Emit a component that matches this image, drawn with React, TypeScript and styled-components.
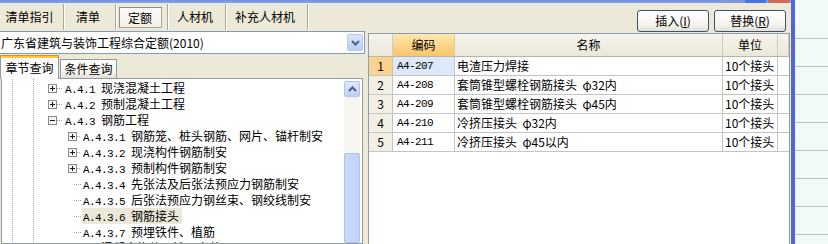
import React from 'react';
import styled, { createGlobalStyle } from 'styled-components';

const FONT = `"Noto Sans CJK SC", "Liberation Sans", sans-serif`;
const MONO = `"Liberation Mono", "DejaVu Sans Mono", monospace`;

const GlobalStyle = createGlobalStyle`
  html, body { margin: 0; padding: 0; }
  body {
    width: 828px;
    height: 244px;
    overflow: hidden;
    background: #f1faf7;
    font-family: ${FONT};
    font-size: 12px;
    color: #000;
  }
  * { box-sizing: border-box; }
`;

const Root = styled.div`
  display: flex;
  width: 828px;
  height: 244px;
  overflow: hidden;
`;

const Window = styled.div`
  width: 795px;
  flex: none;
  display: flex;
  flex-direction: column;
  background: #ece9d8;
  border-right: 4px solid #5567d4;
  overflow: hidden;
`;

const TitleStrip = styled.div`
  height: 3px;
  flex: none;
  display: flex;
  justify-content: flex-end;
  gap: 2px;
  padding-right: 2px;
  background: linear-gradient(#6f8fe0, #8aa5e6);
`;

const CaptionButton = styled.div<{ $tone: 'min' | 'max' | 'close' }>`
  width: 21px;
  height: 3px;
  background: ${(p) => (p.$tone === 'close' ? '#cf6a58' : p.$tone === 'max' ? '#4573e0' : '#7d96d8')};
`;

const TopBar = styled.div`
  height: 28px;
  flex: none;
  display: flex;
  align-items: flex-start;
`;

const Tabs = styled.div`
  display: flex;
  height: 28px;
`;

const Tab = styled.div<{ $w: number }>`
  width: ${(p) => p.$w}px;
  display: flex;
  align-items: center;
  justify-content: center;
  padding-right: 4px;
  line-height: 14px;
  white-space: nowrap;
`;

const TabSep = styled.div`
  width: 2px;
  margin: 1px 0 1px;
  border-left: 1px solid #aca899;
  border-right: 1px solid #fff;
`;

const ActiveTabBox = styled.div`
  width: 43px;
  height: 21px;
  margin-top: 1px;
  display: flex;
  align-items: center;
  justify-content: center;
  border: 1px solid #a9a697;
  border-top-color: #8f8c7e;
  border-left-color: #8f8c7e;
  background: linear-gradient(#fbfbf9, #f1efe7);
`;

const ButtonGroup = styled.div`
  margin-left: auto;
  display: flex;
  gap: 5px;
  padding: 7px 5px 0 0;
`;

const PushButton = styled.div`
  width: 72px;
  height: 22px;
  display: flex;
  align-items: center;
  justify-content: center;
  border: 1px solid #3d5270;
  border-radius: 3px;
  background: linear-gradient(#ffffff, #f4f3ee 70%, #e2dfd4);
  line-height: 14px;
  u { text-underline-offset: 1px; }
`;

const Main = styled.div`
  flex: 1;
  min-height: 0;
  display: flex;
`;

const LeftPane = styled.div`
  width: 365px;
  flex: none;
  display: flex;
  flex-direction: column;
`;

const Combo = styled.div`
  height: 23px;
  flex: none;
  display: flex;
  align-items: center;
  background: #fff;
  border: 1px solid #7f9db9;
  border-left: none;
  padding-left: 1px;
`;

const ComboText = styled.div`
  flex: 1;
  line-height: 14px;
  white-space: nowrap;
`;

const ComboArrow = styled.div`
  width: 16px;
  height: 17px;
  margin-right: 1px;
  display: flex;
  align-items: center;
  justify-content: center;
  border: 1px solid #b6c9f3;
  border-radius: 2px;
  background: linear-gradient(#dde7fd, #b9cdf8);
`;

const SubTabs = styled.div`
  height: 25px;
  flex: none;
  display: flex;
  align-items: flex-end;
  padding-top: 1px;
  margin-bottom: -1px;
  position: relative;
  z-index: 1;
`;

const SubTabActive = styled.div`
  width: 59px;
  height: 24px;
  display: flex;
  align-items: center;
  justify-content: center;
  background: #fcfcfe;
  border: 1px solid #919b9c;
  border-top: 1px solid #e68b2c;
  border-bottom: none;
  box-shadow: inset 0 2px 0 #ffc73c;
  padding-top: 1px;
  line-height: 14px;
`;

const SubTabInactive = styled.div`
  width: 57px;
  height: 19px;
  margin-left: 1px;
  margin-bottom: 1px;
  display: flex;
  align-items: center;
  justify-content: center;
  border: 1px solid #919b9c;
  border-bottom: none;
  background: linear-gradient(#ffffff, #f3f2ec 70%, #e3e1d7);
  line-height: 14px;
`;

const TreePanel = styled.div`
  flex: 1;
  min-height: 0;
  margin: 0 2px 0 1px;
  border: 1px solid #919b9c;
  background: #fff;
  display: flex;
  overflow: hidden;
`;

const TreeList = styled.div`
  flex: 1;
  min-width: 0;
  padding-top: 1px;
  overflow: hidden;
  background-image: repeating-linear-gradient(to bottom, #a3a3a3 0 1px, transparent 1px 2px),
    repeating-linear-gradient(to bottom, #a3a3a3 0 1px, transparent 1px 2px);
  background-size: 1px 100%, 1px 100%;
  background-position: 10px 0, 31px 0;
  background-repeat: no-repeat;
`;

const TreeRow = styled.div<{ $pad: number }>`
  height: 16px;
  display: flex;
  align-items: center;
  padding-left: ${(p) => p.$pad}px;
  white-space: nowrap;
`;

const Stub = styled.span<{ $w: number }>`
  width: ${(p) => p.$w}px;
  height: 1px;
  flex: none;
  background: repeating-linear-gradient(to right, #a3a3a3 0 1px, transparent 1px 2px);
`;

const BoxSvg = styled.svg`
  flex: none;
  display: block;
`;

const NodeLabel = styled.span<{ $selected?: boolean }>`
  margin-left: 1px;
  padding: 0 3px 0 1px;
  height: 16px;
  line-height: 16px;
  background: ${(p) => (p.$selected ? '#ebe8da' : 'transparent')};
`;

const Code = styled.span`
  font-family: ${MONO};
  font-size: 11px;
  letter-spacing: -0.6px;
  white-space: pre;
`;

const ScrollBar = styled.div`
  width: 16px;
  flex: none;
  margin: 2px 2px 0 0;
  display: flex;
  flex-direction: column;
  background: #f6f5f0;
`;

const ScrollButton = styled.div`
  height: 16px;
  flex: none;
  display: flex;
  align-items: center;
  justify-content: center;
  border: 1px solid #b3c6f2;
  border-radius: 2px;
  background: linear-gradient(#e0e9fd, #bccff8);
`;

const ScrollGap = styled.div`
  height: 56px;
  flex: none;
`;

const ScrollThumb = styled.div`
  flex: 1;
  border: 1px solid #adc2f0;
  border-radius: 2px;
  background: linear-gradient(to right, #cbdafb, #c2d3fa);
`;

const RightPane = styled.div`
  flex: 1;
  min-width: 0;
  display: flex;
  flex-direction: column;
  padding: 2px 1px 0 3px;
`;

const TableBox = styled.div`
  flex: 1;
  border: 1px solid #8f9cae;
  border-bottom: none;
  background: #fff;
  overflow: hidden;
`;

const COLS = '24px 62px 268px 55px 1fr';

const HeaderRow = styled.div`
  display: grid;
  grid-template-columns: ${COLS};
  height: 23px;
  border-bottom: 1px solid #b8b6a8;
`;

const HeaderCell = styled.div<{ $active?: boolean }>`
  display: flex;
  align-items: center;
  justify-content: center;
  border-right: 1px solid #cfccbc;
  background: ${(p) =>
    p.$active ? 'linear-gradient(#ffe6b0, #f8c668)' : 'linear-gradient(#f6f4ec, #ebe8d9)'};
  line-height: 14px;
`;

const DataRow = styled.div`
  display: grid;
  grid-template-columns: ${COLS};
  height: 19px;
`;

const Cell = styled.div<{ $bg?: string; $center?: boolean; $pad?: number }>`
  display: flex;
  align-items: center;
  justify-content: ${(p) => (p.$center ? 'center' : 'flex-start')};
  padding-left: ${(p) => p.$pad ?? 0}px;
  border-right: 1px solid #c4c4c4;
  border-bottom: 1px solid #c4c4c4;
  background: ${(p) => p.$bg ?? '#fff'};
  line-height: 14px;
  white-space: pre;
  overflow: hidden;
`;

const FillCell = styled.div`
  border-bottom: 1px solid #c4c4c4;
`;

const OuterSheet = styled.div`
  flex: 1;
  display: flex;
  flex-direction: column;
  background: #f1faf7;
`;

const SheetCell = styled.div<{ $h: number }>`
  height: ${(p) => p.$h}px;
  flex: none;
  border-bottom: 1px solid #b9c4c0;
`;

type TreeNode = {
  level: 1 | 2;
  kind: 'plus' | 'minus' | 'leaf';
  code: string;
  name: string;
  selected?: boolean;
};

const tree: TreeNode[] = [
  { level: 1, kind: 'plus', code: 'A.4.1', name: '现浇混凝土工程' },
  { level: 1, kind: 'plus', code: 'A.4.2', name: '预制混凝土工程' },
  { level: 1, kind: 'minus', code: 'A.4.3', name: '钢筋工程' },
  { level: 2, kind: 'plus', code: 'A.4.3.1', name: '钢筋笼、桩头钢筋、网片、锚杆制安' },
  { level: 2, kind: 'plus', code: 'A.4.3.2', name: '现浇构件钢筋制安' },
  { level: 2, kind: 'plus', code: 'A.4.3.3', name: '预制构件钢筋制安' },
  { level: 2, kind: 'leaf', code: 'A.4.3.4', name: '先张法及后张法预应力钢筋制安' },
  { level: 2, kind: 'leaf', code: 'A.4.3.5', name: '后张法预应力钢丝束、钢绞线制安' },
  { level: 2, kind: 'leaf', code: 'A.4.3.6', name: '钢筋接头', selected: true },
  { level: 2, kind: 'leaf', code: 'A.4.3.7', name: '预埋铁件、植筋' },
  { level: 1, kind: 'plus', code: 'A.4.4', name: '混凝土构件运输及安装' },
];

const rows = [
  { n: 1, code: 'A4-207', name: '电渣压力焊接', unit: '10个接头' },
  { n: 2, code: 'A4-208', name: '套筒锥型螺栓钢筋接头  φ32内', unit: '10个接头' },
  { n: 3, code: 'A4-209', name: '套筒锥型螺栓钢筋接头  φ45内', unit: '10个接头' },
  { n: 4, code: 'A4-210', name: '冷挤压接头  φ32内', unit: '10个接头' },
  { n: 5, code: 'A4-211', name: '冷挤压接头  φ45以内', unit: '10个接头' },
];

const ExpandBox = ({ open }: { open?: boolean }) => (
  <BoxSvg width="9" height="9" viewBox="0 0 9 9">
    <rect x="0.5" y="0.5" width="8" height="8" fill="#f6f6f1" stroke="#8a8a8a" />
    <path d="M2 4.5h5" stroke="#1a1a1a" />
    {!open && <path d="M4.5 2v5" stroke="#1a1a1a" />}
  </BoxSvg>
);

const TreeItem = ({ node }: { node: TreeNode }) => {
  let pad = 46;
  let lead: React.ReactNode;
  if (node.level === 1) {
    pad = 46;
    lead = (
      <>
        <ExpandBox open={node.kind === 'minus'} />
        <Stub $w={6} />
      </>
    );
  } else if (node.kind === 'leaf') {
    pad = 72;
    lead = <Stub $w={7} />;
  } else {
    pad = 66;
    lead = (
      <>
        <ExpandBox open={node.kind === 'minus'} />
        <Stub $w={4} />
      </>
    );
  }
  return (
    <TreeRow $pad={pad}>
      {lead}
      <NodeLabel $selected={node.selected}>
        <Code>{node.code + ' '}</Code>
        {node.name}
      </NodeLabel>
    </TreeRow>
  );
};

export default function App() {
  return (
    <>
      <GlobalStyle />
      <Root>
        <Window>
          <TitleStrip>
            <CaptionButton $tone="min" />
            <CaptionButton $tone="max" />
            <CaptionButton $tone="close" />
          </TitleStrip>
          <TopBar>
            <Tabs>
              <Tab $w={63}>清单指引</Tab>
              <TabSep />
              <Tab $w={50}>清单</Tab>
              <TabSep />
              <Tab $w={50}>
                <ActiveTabBox>定额</ActiveTabBox>
              </Tab>
              <TabSep />
              <Tab $w={56}>人材机</Tab>
              <TabSep />
              <Tab $w={80}>补充人材机</Tab>
              <TabSep />
            </Tabs>
            <ButtonGroup>
              <PushButton>
                插入(<u>I</u>)
              </PushButton>
              <PushButton>
                替换(<u>R</u>)
              </PushButton>
            </ButtonGroup>
          </TopBar>
          <Main>
            <LeftPane>
              <Combo>
                <ComboText>广东省建筑与装饰工程综合定额(2010)</ComboText>
                <ComboArrow>
                  <svg width="9" height="6" viewBox="0 0 9 6">
                    <path d="M1 1l3.5 3.5L8 1" fill="none" stroke="#4d6185" strokeWidth="2" />
                  </svg>
                </ComboArrow>
              </Combo>
              <SubTabs>
                <SubTabActive>章节查询</SubTabActive>
                <SubTabInactive>条件查询</SubTabInactive>
              </SubTabs>
              <TreePanel>
                <TreeList>
                  {tree.map((n) => (
                    <TreeItem key={n.code} node={n} />
                  ))}
                </TreeList>
                <ScrollBar>
                  <ScrollButton>
                    <svg width="9" height="6" viewBox="0 0 9 6">
                      <path d="M1 5l3.5-3.5L8 5" fill="none" stroke="#4d6185" strokeWidth="2" />
                    </svg>
                  </ScrollButton>
                  <ScrollGap />
                  <ScrollThumb />
                </ScrollBar>
              </TreePanel>
            </LeftPane>
            <RightPane>
              <TableBox>
                <HeaderRow>
                  <HeaderCell />
                  <HeaderCell $active>编码</HeaderCell>
                  <HeaderCell>名称</HeaderCell>
                  <HeaderCell>单位</HeaderCell>
                  <HeaderCell />
                </HeaderRow>
                {rows.map((r) => (
                  <DataRow key={r.n}>
                    <Cell $center $bg={r.n === 1 ? '#fad38e' : '#f2f0e5'}>
                      {r.n}
                    </Cell>
                    <Cell $pad={4} $bg={r.n === 1 ? '#dde8f8' : '#fff'}>
                      <Code>{r.code}</Code>
                    </Cell>
                    <Cell $pad={2}>{r.name}</Cell>
                    <Cell $pad={2}>{r.unit}</Cell>
                    <FillCell />
                  </DataRow>
                ))}
              </TableBox>
            </RightPane>
          </Main>
        </Window>
        <OuterSheet>
          <SheetCell $h={39} />
          {Array.from({ length: 8 }).map((_, i) => (
            <SheetCell key={i} $h={28} />
          ))}
        </OuterSheet>
      </Root>
    </>
  );
}
